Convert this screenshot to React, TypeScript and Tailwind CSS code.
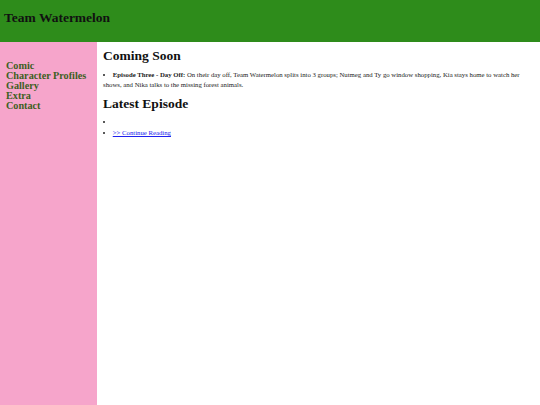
export default function App() {
  return (
    <div className="min-h-[405px] w-[540px] flex flex-col bg-white" style={{ fontFamily: '"Liberation Serif", "Times New Roman", serif' }}>
      <header className="h-[42px] bg-[#2e8c1b] flex items-start px-[4px] pt-[9px]">
        <h1 className="text-[13.5px] font-bold text-[#111] leading-[18px] m-0">Team Watermelon</h1>
      </header>
      <div className="flex flex-1 min-h-[363px]">
        <nav className="w-[97px] bg-[#f6a5cb] pt-[19px] px-[6px]">
          <ul className="flex flex-col">
            {["Comic", "Character Profiles", "Gallery", "Extra", "Contact"].map((t) => (
              <li key={t} className="text-[10.2px] font-bold leading-[10px] text-[#3d5f22] whitespace-nowrap">{t}</li>
            ))}
          </ul>
        </nav>
        <main className="flex-1 px-[6px] pt-[5px]">
          <h2 className="text-[13.5px] font-bold leading-[18px] text-[#111]">Coming Soon</h2>
          <ul className="mt-[5px] list-disc list-inside text-[6.75px] leading-[10px] text-[#222]">
            <li>
              <b>Episode Three - Day Off:</b> On their day off, Team Watermelon splits into 3 groups; Nutmeg and Ty go window shopping, Kia stays home to watch her shows, and Nika talks to the missing forest animals.
            </li>
          </ul>
          <h2 className="mt-[5px] text-[13.5px] font-bold leading-[18px] text-[#111]">Latest Episode</h2>
          <ul className="mt-[3px] list-disc list-inside text-[6.75px] leading-[11px] text-[#222]">
            <li>&nbsp;</li>
            <li>
              <a href="#" className="text-[#2020ee] underline">&gt;&gt; Continue Reading</a>
            </li>
          </ul>
        </main>
      </div>
    </div>
  );
}
